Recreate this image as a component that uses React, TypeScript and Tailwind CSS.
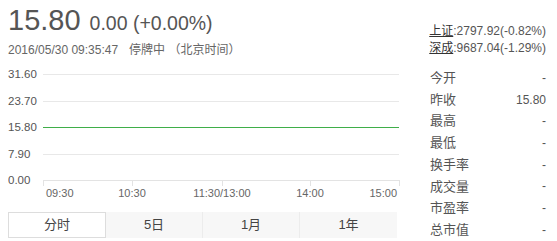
import React from 'react';

const font = "font-['Liberation_Sans','Noto_Sans_CJK_SC',sans-serif]";

const stats: [string, string][] = [
  ['今开', '-'],
  ['昨收', '15.80'],
  ['最高', '-'],
  ['最低', '-'],
  ['换手率', '-'],
  ['成交量', '-'],
  ['市盈率', '-'],
  ['总市值', '-'],
];

const gridY = [11, 38, 91];
const yLabels = ['31.60', '23.70', '15.80', '7.90', '0.00'];
const ticks = [35, 124, 214, 302, 391];

const Chart = () => (
  <svg width="392" height="140" className="block" shapeRendering="crispEdges">
    {gridY.map((y) => (
      <line key={y} x1="35" x2="391" y1={y + 0.5} y2={y + 0.5} stroke="#e8e8e8" strokeWidth="1" />
    ))}
    {/* price line */}
    <rect x="35" y="64" width="356" height="1" fill="#3fae49" />
    <line x1="35" x2="391" y1="117.5" y2="117.5" stroke="#e3e3e3" />
    {ticks.map((x) => (
      <line key={x} x1={x + 0.5} x2={x + 0.5} y1="117" y2="123" stroke="#e3e3e3" />
    ))}
    {yLabels.map((l, i) => (
      <text
        key={l}
        x="0"
        y={[11, 38, 64, 91, 117][i] + 4}
        fontSize="11.5"
        fill="#555"
        fontFamily="Liberation Sans, sans-serif"
      >
        {l}
      </text>
    ))}
    <g fontSize="11" fill="#666" fontFamily="Liberation Sans, sans-serif">
      <text x="38" y="134">09:30</text>
      <text x="124" y="134" textAnchor="middle">10:30</text>
      <text x="214" y="134" textAnchor="middle">11:30/13:00</text>
      <text x="302" y="134" textAnchor="middle">14:00</text>
      <text x="389" y="134" textAnchor="end">15:00</text>
    </g>
  </svg>
);

export default function App() {
  return (
    <div className={`w-[557px] h-[241px] bg-white flex overflow-hidden ${font}`}>
      <div className="w-[400px] shrink-0 pl-[8px] flex flex-col">
        <div className="flex items-baseline gap-[9px] pt-[6px] text-[#555]">
          <span className="text-[29px] leading-[28px]">15.80</span>
          <span className="text-[19.5px] leading-[28px]">0.00 (+0.00%)</span>
        </div>
        <div className="flex items-center mt-[6px] h-[14px] text-[12px] text-[#666]">
          <span>2016/05/30 09:35:47</span>
          <span className="ml-[11px]">停牌中 （北京时间）</span>
        </div>
        <div className="mt-[6px]">
          <Chart />
        </div>
        <div className="mt-[9px] flex w-[389px] h-[26px] text-[13px] text-[#444] bg-[#f7f7f7]">
          <div className="w-[98px] flex items-center justify-center bg-white border border-[#ddd]">分时</div>
          <div className="w-[97px] flex items-center justify-center border-r border-[#ececec]">5日</div>
          <div className="w-[97px] flex items-center justify-center border-r border-[#ececec]">1月</div>
          <div className="flex-1 flex items-center justify-center">1年</div>
        </div>
      </div>
      <div className="flex-1 min-w-0 pl-[30px] pr-[11px] flex flex-col">
        <div className="mt-[23px] flex flex-col items-end whitespace-nowrap text-[12px] leading-[17px] text-[#555]">
          <div>
            <span className="underline text-[#333]">上证</span>:2797.92(-0.82%)
          </div>
          <div>
            <span className="underline text-[#333]">深成</span>:9687.04(-1.29%)
          </div>
        </div>
        <div className="mt-[10px] flex flex-col text-[13px] text-[#555]">
          {stats.map(([k, v]) => (
            <div key={k} className="h-[21.7px] flex items-center justify-between">
              <span>{k}</span>
              <span className="text-[12px]">{v}</span>
            </div>
          ))}
        </div>
      </div>
    </div>
  );
}
